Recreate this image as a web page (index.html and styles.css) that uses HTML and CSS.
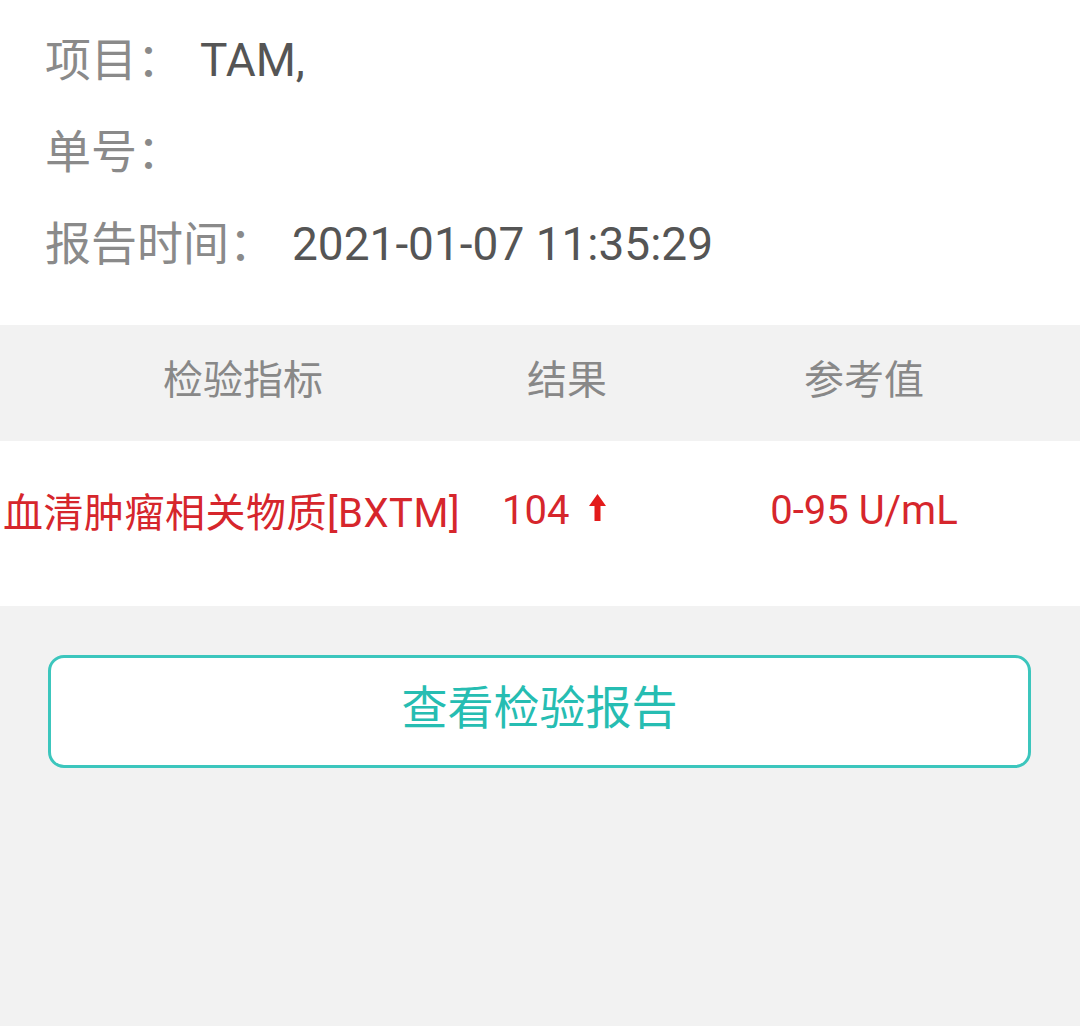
FILE: index.html
```html
<!DOCTYPE html>
<html lang="zh-CN">
<head>
  <meta charset="UTF-8">
  <meta name="viewport" content="width=device-width, initial-scale=1.0">
  <title>检验报告</title>
  <link rel="stylesheet" href="styles.css">
</head>
<body>

<div class="info">
  <div class="info-row"><span class="label">项目：</span><span class="value">TAM,</span></div>
  <div class="info-row"><span class="label">单号：</span><span class="value"></span></div>
  <div class="info-row"><span class="label">报告时间：</span><span class="value">2021-01-07 11:35:29</span></div>
</div>

<div class="table-head">
  <div class="col col-name">检验指标</div>
  <div class="col col-result">结果</div>
  <div class="col col-ref">参考值</div>
</div>

<div class="table-row">
  <div class="col col-name cell-name">血清肿瘤相关物质[BXTM]</div>
  <div class="col col-result cell-result">104
    <svg class="arrow" width="17" height="27" viewBox="0 0 17 27"><path d="M8.5 0 L17 12 L11.5 12 L11.5 27 L5.5 27 L5.5 12 L0 12 Z" fill="#e31b1b"/></svg>
  </div>
  <div class="col col-ref">0-95 U/mL</div>
</div>

<div class="actions">
  <div id="botao">查看检验报告</div>
</div>

</body>
</html>
```

FILE: styles.css
```css
body{
  margin: 0;
  font-family: Roboto, "Noto Sans CJK SC", sans-serif;
  background-color: #f2f2f2;
}

.info{
  background-color: #fff;
  padding: 14px 0 35px 45px;
}
.info-row{
  height: 92px;
  line-height: 92px;
  font-size: 46px;
  display: flex;
}
.label{
  color: #8a8a8a;
}
.value{
  color: #555;
  margin-left: 17px;
}

.table-head,
.table-row{
  display: flex;
  font-size: 40px;
}
.table-head{
  height: 116px;
  box-sizing: border-box;
  padding-bottom: 12px;
  align-items: center;
  color: #888;
  background-color: #f2f2f2;
}
.table-row{
  height: 165px;
  box-sizing: border-box;
  padding-bottom: 27px;
  align-items: center;
  background-color: #fff;
  color: #d6262c;
}
.col{
  text-align: center;
  white-space: nowrap;
}
.col-name{ width: 486px; }
.col-result{ width: 162px; }
.col-ref{ width: 432px; }

.cell-name{
  text-align: left;
  padding-left: 3px;
  box-sizing: border-box;
  letter-spacing: 0.5px;
}
.cell-result{
  text-align: left;
  padding-left: 16px;
  box-sizing: border-box;
  display: flex;
  align-items: center;
}
.arrow{
  margin-left: 20px;
  margin-top: -6px;
}

.actions{
  padding: 49px 49px 0 48px;
}
#botao{
  height: 113px;
  box-sizing: border-box;
  border: 3px solid #3cc6bd;
  border-radius: 16px;
  padding-bottom: 16px;
  background-color: #fff;
  color: #26bdb2;
  font-size: 46px;
  display: flex;
  align-items: center;
  justify-content: center;
}
```
